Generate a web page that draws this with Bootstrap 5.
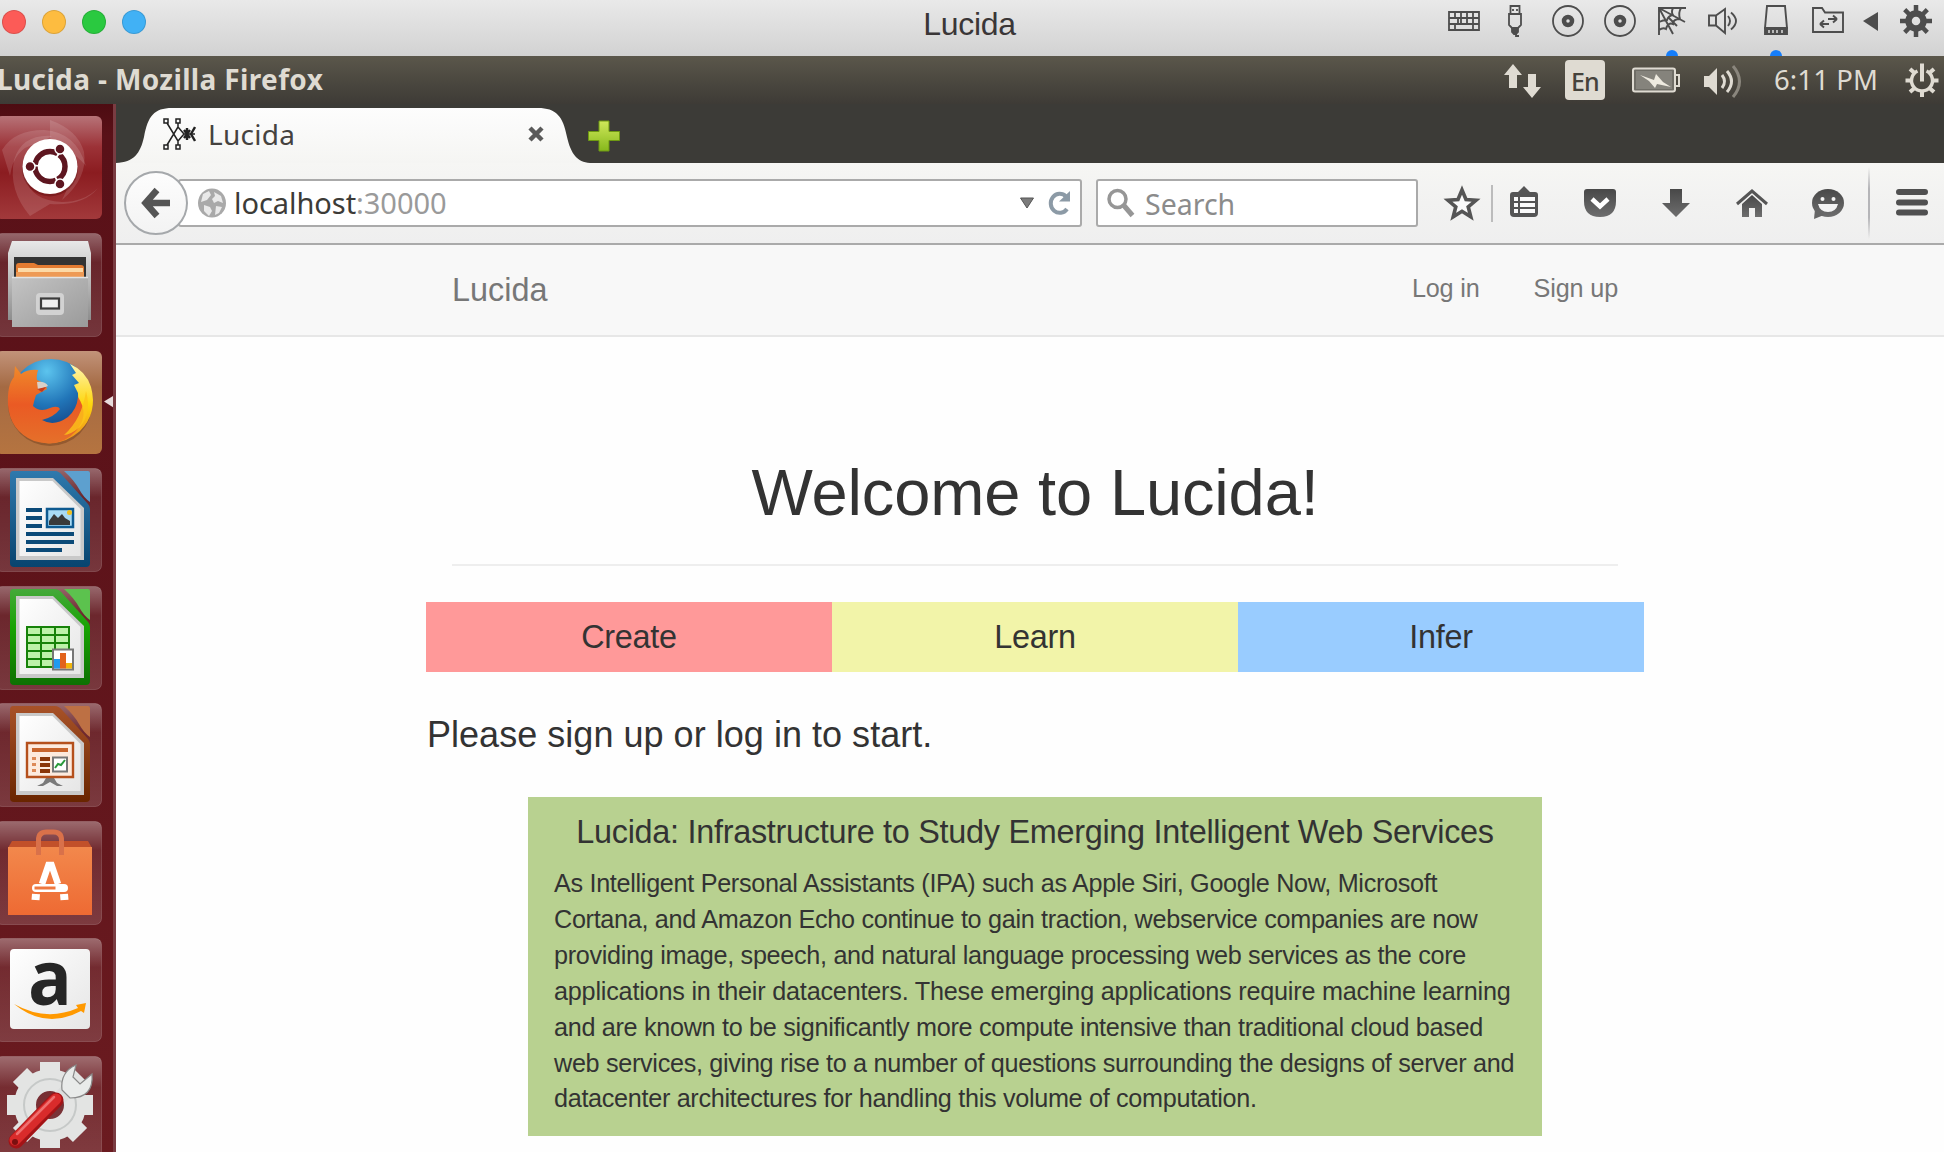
<!DOCTYPE html>
<html lang="en">
<head>
<meta charset="utf-8">
<title>Lucida</title>
<link href="https://cdn.jsdelivr.net/npm/bootstrap@5.3.0/dist/css/bootstrap.min.css" rel="stylesheet">
<script src="https://cdn.jsdelivr.net/npm/bootstrap@5.3.0/dist/js/bootstrap.bundle.min.js"></script>
<style>
body{height:1152px;width:1944px;overflow:hidden;font-family:"Liberation Sans",Arial,sans-serif;color:#333;background:#fefefe}
svg{display:block;flex:none}
.ui-font{font-family:"Noto Sans","Open Sans",sans-serif;white-space:nowrap}
/* host window title bar */
.vm-bar{height:56px;background:linear-gradient(#e9e9e9,#d2d2d2)}
.vm-side{width:506px}
.lights{gap:16px;padding-left:2px;height:44px}
.light{width:24px;height:24px;border-radius:50%;border:1px solid rgba(0,0,0,.13)}
.vm-title{font-size:32px;line-height:40px;color:#3a3637;letter-spacing:-.3px;padding-top:4px;padding-right:5px}
.vm-icons{color:#4d4d4d}
/* guest panel */
.panel{height:48px;background:linear-gradient(#5b574b,#4a473f 55%,#3e3b36);color:#dfdbd2}
.panel-title{font-size:28px;font-weight:700;line-height:47px;letter-spacing:.36px;margin-left:-3px}
.lang{width:40px;height:40px;background:#dfdbd2;color:#45423b;border-radius:4px;font-size:25px;line-height:42px;font-weight:500;letter-spacing:-.8px;margin:4px 23px 4px 17px}
.clock{font-size:27.5px;line-height:48px;width:108px;letter-spacing:.1px;margin:0 20px 0 28px}
/* launcher */
.launcher{width:116px;background:linear-gradient(#4d0c12,#5a1118 3%,#5d131a 40%,#6b1b20);border-right:3px solid #7a3c42;padding-top:11.6px;gap:13.5px;overflow:hidden}
/* browser */
.tabs{height:59px;background:#3c3b37;border-bottom:0}
.tab-shape{width:472px;height:59px;position:relative}
.tab-body{position:absolute;inset:0;padding:0 43px 0 46px}
.tab-name{font-size:28px;color:#45423f;margin-left:12px;letter-spacing:.3px}
.toolbar{height:82px;background:linear-gradient(#f6f6f4,#f2f2f1 50%,#efefef);border-bottom:2px solid #aaa}
.field{height:48px;background:#fff;border:2px solid #aaa;border-radius:3px}
.url{width:904px;margin-left:-10px;padding-left:18px;padding-right:6px}
.url-text{font-size:29px;color:#3c3b37;line-height:46px;margin-left:8px;letter-spacing:-.05px}
.port{color:#9a9a9a}
.search{width:322px;margin-left:14px;padding-left:9px;color:#8b8b8b;font-size:28.5px}
.search-label{margin-left:10px;padding-top:2px}
.back{width:64px;height:64px;border-radius:50%;border:2px solid #a5a8ab;background:linear-gradient(#fdfdfd,#f3f3f3);margin-left:8px;z-index:1}
.vr-a{width:1.5px;height:37px;background:#bcbcbc}
.vr-b{width:2px;height:72px;background:linear-gradient(transparent,#b5b5b8 30%,#b5b5b8 70%,transparent)}
/* page */
.site-nav{height:92px;background:#f8f8f8;border-bottom:2px solid #e7e7e7;color:#777}
.wrap{width:1166px;margin-left:336px}
.brand{font-size:32.4px;line-height:90px}
.nav-a{font-size:25.2px;line-height:87px;white-space:nowrap;letter-spacing:-.15px}
.log-in{margin-right:6px}
.hero{font-size:65px;letter-spacing:-.14px;line-height:72px;padding-top:120px;padding-bottom:35px;border-bottom:2px solid #eee;font-weight:400}
.steps{width:1218px;margin-left:310px;margin-top:36px}
.step{height:70px;font-size:32.4px;line-height:70px;letter-spacing:-.3px}
.bg-create{background:#ff9999}.bg-learn{background:#f2f4a9}.bg-infer{background:#99ccff}
.prompt{margin:39px 0 0 311px;font-size:36px;line-height:48px;white-space:nowrap;letter-spacing:.03px}
.about{width:1014px;margin:38px 0 0 412px;padding:0 26px;height:339px;background:#b8d190}
.about-title{font-size:32.4px;line-height:36px;padding-top:17px;margin:0 0 16px;white-space:nowrap;font-weight:400;letter-spacing:-.28px}
.about p{font-size:25.2px;line-height:35.9px;white-space:nowrap;margin:0;letter-spacing:-.305px}
.looser{letter-spacing:-.2px}
</style>
</head>
<body class="d-flex flex-column">
<svg width="0" height="0" class="position-absolute">
<defs>
<linearGradient id="tile" x1="0" y1="0" x2="0" y2="1"><stop offset="0" stop-color="#fff" stop-opacity=".36"/><stop offset=".28" stop-color="#fff" stop-opacity=".08"/><stop offset="1" stop-color="#fff" stop-opacity=".15"/></linearGradient>
<linearGradient id="paper" x1="0" y1="0" x2="1" y2="1"><stop offset="0" stop-color="#fff"/><stop offset="1" stop-color="#e6e6e6"/></linearGradient>
<linearGradient id="wr" x1="0" y1="0" x2="0" y2="1"><stop offset="0" stop-color="#2f79ad"/><stop offset="1" stop-color="#07446f"/></linearGradient>
<linearGradient id="ca" x1="0" y1="0" x2="0" y2="1"><stop offset="0" stop-color="#45a93b"/><stop offset=".4" stop-color="#18a303"/><stop offset="1" stop-color="#0d7003"/></linearGradient>
<linearGradient id="im" x1="0" y1="0" x2="0" y2="1"><stop offset="0" stop-color="#a85228"/><stop offset="1" stop-color="#692500"/></linearGradient>
<linearGradient id="metal" x1="0" y1="0" x2="0" y2="1"><stop offset="0" stop-color="#e8e8e8"/><stop offset="1" stop-color="#8d8d8d"/></linearGradient>
<linearGradient id="metal2" x1="0" y1="0" x2="1" y2="1"><stop offset="0" stop-color="#c4c4c4"/><stop offset="1" stop-color="#9a9a9a"/></linearGradient>
<linearGradient id="ora" x1="0" y1="0" x2="0" y2="1"><stop offset="0" stop-color="#f2884c"/><stop offset="1" stop-color="#ee6a33"/></linearGradient>
<linearGradient id="brn" x1="0" y1="0" x2="0" y2="1"><stop offset="0" stop-color="#c2937a"/><stop offset=".35" stop-color="#a46a43"/><stop offset="1" stop-color="#b57440"/></linearGradient>
<linearGradient id="ub" x1="0" y1="0" x2="0" y2="1"><stop offset="0" stop-color="#b77378"/><stop offset=".3" stop-color="#9c3237"/><stop offset=".55" stop-color="#8b1c20"/><stop offset="1" stop-color="#a2393b"/></linearGradient>
<radialGradient id="globe" cx=".45" cy=".15" r=".9"><stop offset="0" stop-color="#5cc4ee"/><stop offset=".45" stop-color="#2175b8"/><stop offset="1" stop-color="#0d2a6b"/></radialGradient>
<linearGradient id="fox" x1="0" y1="0" x2="0" y2="1"><stop offset="0" stop-color="#f08a2a"/><stop offset=".5" stop-color="#ea5a24"/><stop offset="1" stop-color="#e5702a"/></linearGradient>
<linearGradient id="flame" x1="0" y1="0" x2="0" y2="1"><stop offset="0" stop-color="#fff4b0"/><stop offset=".5" stop-color="#fdd70f"/><stop offset="1" stop-color="#f08a1c"/></linearGradient>
<linearGradient id="tabg" x1="0" y1="0" x2="0" y2="1"><stop offset="0" stop-color="#fdfdfd"/><stop offset="1" stop-color="#f5f5f3"/></linearGradient>
<linearGradient id="pl" x1="0" y1="0" x2="0" y2="1"><stop offset="0" stop-color="#cfe85a"/><stop offset="1" stop-color="#86b81c"/></linearGradient>
<linearGradient id="ico" x1="0" y1="0" x2="0" y2="1"><stop offset="0" stop-color="#484848"/><stop offset="1" stop-color="#6e6e6e"/></linearGradient>
</defs>
</svg>

<header class="vm-bar d-flex justify-content-between flex-shrink-0">
  <div class="vm-side">
    <div class="lights d-flex align-items-center">
      <span class="light" style="background:#fc5b57"></span><span class="light" style="background:#fdbc40"></span><span class="light" style="background:#2ac940"></span><span class="light" style="background:#41b1f5"></span>
    </div>
  </div>
  <div class="vm-title">Lucida</div>
  <div class="vm-icons vm-side d-flex">
    <svg width="52" height="56" viewBox="-26 0 52 56" fill="none" stroke="currentColor" stroke-width="1.8"><path d="M-15 12h30v18h-30zM-15 18h30M-15 24h30M-9 12v6M-3 12v12M3 12v12M9 12v12M-9 24v6M9 24v6M-6 18v6"/></svg>
    <svg width="52" height="56" viewBox="-25 0 52 56" fill="none" stroke="currentColor" stroke-width="1.8"><path d="M-4.500 14V6h9v8M-6 14h12v11l-3 3h-6l-3-3zM-2 9v2M2 9v2"/><path d="M-3 28h6v4l-2 2h-2l-2-2z" fill="currentColor"/><path d="M1 33v3h3"/></svg>
    <svg width="52" height="56" viewBox="-26 0 52 56" fill="none" stroke="currentColor" stroke-width="1.8"><circle cy="21" r="15"/><circle cy="21" r="4" stroke-width="4.500"/></svg>
    <svg width="52" height="56" viewBox="-26 0 52 56" fill="none" stroke="currentColor" stroke-width="1.8"><circle cy="21" r="15"/><circle cy="21" r="4" stroke-width="4.500"/></svg>
    <svg width="52" height="56" viewBox="-26 0 52 56" fill="none" stroke="currentColor" stroke-width="1.9"><path d="M-13 35V8H14M-13 8L13 22M-13 8L1 34M9 8Q6 13 8 19Q1 19 1 24Q-4 22-6 29Q-9 27-13 30M1 8Q-1 12 1 15Q-4 16-5 20Q-9 20-13 22M-4 17L5 26"/><circle cy="56" r="6" fill="#157efb" stroke="none"/></svg>
    <svg width="52" height="56" viewBox="-26 0 52 56" fill="none" stroke="currentColor" stroke-width="1.9"><path d="M-15 15.500h7v10h-7zM-8 15.500L1 9v24l-9-7.500M4 16q4 5 0 10M7 12.500q10 8.500 0 17" /></svg>
    <svg width="52" height="56" viewBox="-26 0 52 56" fill="none" stroke="currentColor" stroke-width="1.9"><path d="M-9 6H9L11 28H-11z"/><path d="M-11 28h22v6h-22z" fill="currentColor"/><path d="M-7 30v3M-3 30v3M1 30v3M6 30v3" stroke="#ddd" stroke-width="1.500"/><circle cy="56" r="6" fill="#157efb" stroke="none"/></svg>
    <svg width="52" height="56" viewBox="-26 0 52 56" fill="none" stroke="currentColor" stroke-width="1.9"><path d="M-15 32V8h9l3 4.500H15V32zM-8 24H1M-8 24l4-3.500M-8 24l4 3.500M9 19H0M9 19l-4-3.500M9 19l-4 3.500"/></svg>
    <svg width="34" height="56" viewBox="-17 0 34 56"><path d="M-8 21L7 12v19z" fill="currentColor"/></svg>
    <svg width="56" height="56" viewBox="-28 0 56 56"><g transform="translate(0 21)" fill="none" stroke="currentColor"><circle r="7.500" stroke-width="6.500"/><path d="M0-16V-9M0 16V9M-16 0H-9M16 0H9M-11.300-11.300L-7-7M11.300 11.300L7 7M-11.300 11.300L-7 7M11.300-11.300L7-7" stroke-width="4.500"/></g></svg>
  </div>
</header>

<div class="panel ui-font d-flex justify-content-between flex-shrink-0">
  <div class="panel-title">Lucida - Mozilla Firefox</div>
  <div class="d-flex">
    <svg width="52" height="48" viewBox="1496 56 52 48" fill="currentColor"><path d="M1513 64l9 11h-5v13h-8V75h-5zM1532 98l9-11h-5V74h-8v13h-5z"/></svg>
    <div class="lang text-center">En</div>
    <svg width="56" height="48" viewBox="1628 56 56 48"><rect x="1633" y="68.500" width="42" height="23" rx="2" fill="#6f6d66" stroke="#dfdbd2" stroke-width="2"/><path d="M1636 71h36v18h-36z" fill="#85837c"/><path d="M1676 75h3v11h-3" fill="none" stroke="#dfdbd2" stroke-width="2"/><path d="M1640 75l14 5 2-6 7 8 8 5-14-3-2 4-6-7z" fill="#eeeae0"/></svg>
    <svg width="62" height="48" viewBox="1684 56 62 48" fill="none" stroke="currentColor" stroke-width="3"><path d="M1704 76h5l8-8v27l-8-8h-5z" fill="currentColor" stroke="none"/><path d="M1722 75q5 6.500 0 13M1727 71q9 10.500 0 21"/><path d="M1733 66q13 15.500 0 31" stroke="#8a867d"/></svg>
    <div class="clock">6:11 PM</div>
    <svg width="42" height="48" viewBox="1902 56 42 48" fill="none" stroke="currentColor"><g transform="translate(1922 80.500)"><path d="M-4.500-9.500A10.500 10.500 0 1 0 4.500-9.500" stroke-width="3.500"/><path d="M0-17V1M0 16.500V11M-16.500 0H-11M16.500 0H11M-12-11.500L-8-8M12 11.500L8 8M-12 11.500L-8 8M12-11.500L8-8" stroke-width="4"/></g></svg>
  </div>
</div>

<div class="d-flex flex-grow-1 overflow-hidden">
  <nav class="launcher d-flex flex-column flex-shrink-0">
    <svg width="116" height="104" viewBox="0 0 116 104"><rect x="-4" width="106" height="103" rx="6" fill="url(#ub)"/><g fill="#fff" fill-opacity=".13"><path d="M50 4Q78 14 84 36Q88 62 62 84Q80 52 50 22z"/><path d="M2 34Q14 14 44 14Q76 16 86 50Q64 24 36 28Q14 32 10 60z"/><path d="M30 100Q8 74 14 44Q22 18 52 20Q24 34 26 62Q30 84 62 86Q84 86 98 72Q84 90 50 88z"/></g><circle cx="50" cy="52.500" r="28" fill="#400" opacity=".3"/><circle cx="50" cy="50.500" r="27.500" fill="#fff"/><circle cx="50" cy="50.500" r="15" fill="none" stroke="#5e1620" stroke-width="5.500" stroke-dasharray="29.400 2" stroke-dashoffset="14"/><g fill="#5e1620" stroke="#fff" stroke-width="1.500"><circle cx="30" cy="50.500" r="5"/><circle cx="60" cy="33" r="5"/><circle cx="60" cy="68" r="5"/></g></svg>
    <svg width="116" height="104" viewBox="0 0 116 104"><rect x="-4" y=".5" width="105.500" height="103" rx="6" fill="url(#tile)" stroke="#fff" stroke-opacity=".16"/><path d="M12 8h76l3 12v67H8V20z" fill="url(#metal)"/><path d="M14 24h72v22H14z" fill="#333"/><path d="M16 33q0-3 3-3h15l4 2h43q3 0 3 3v12H16z" fill="#e37b31"/><path d="M18 35h65v4.500H18z" fill="#fcd9a6"/><path d="M16 39h68v7H16z" fill="#ee9a55"/><path d="M12 44h76v50H12z" fill="url(#metal2)"/><path d="M12 44.500h76" stroke="#e4e4e4" stroke-width="1.500"/><rect x="36" y="60" width="28" height="22" rx="4" fill="#d2d2d2"/><rect x="41" y="65.500" width="18" height="10" fill="#eee" stroke="#3b3b3b" stroke-width="2.200"/></svg>
    <svg width="116" height="104" viewBox="0 0 116 104"><rect x="-4" width="106" height="103" rx="6" fill="url(#brn)"/><ellipse cx="50" cy="53" rx="42" ry="42" fill="#5a2a10" opacity=".35"/><circle cx="51" cy="49" r="41" fill="url(#globe)"/><path d="M70 13Q86 20 91 36Q98 62 80 80Q64 94 46 92L70 76Q80 60 78 42L74 34L79 32L72 24L76 22z" fill="url(#flame)"/><path d="M15 15L21 23Q28 18 38 19Q36 26 37 29Q46 32 47 38L36 44Q34 50 33 55Q40 62 50 57Q58 54 60 58Q54 66 42 69Q54 76 68 66Q77 58 78 46Q90 64 76 80Q60 98 34 90Q10 80 8 54Q7 34 14 26z" fill="url(#fox)"/><path d="M37 31Q45 30 48 35L38 39z" fill="#d8d0c8"/><path d="M37 38l9-2-4 5z" fill="#c33a1c"/><path d="M86 40Q92 62 80 76Q70 84 64 84Q82 68 86 40z" fill="#fcc419" opacity=".8"/><path d="M104 50.500L116 43v15z" fill="#e8dcdc"/></svg>
    <svg width="116" height="104" viewBox="0 0 116 104"><rect x="-4" y=".5" width="105.500" height="103" rx="6" fill="url(#tile)" stroke="#fff" stroke-opacity=".16"/><path d="M13 3h42q4 0 8 5l25 28q2 2 2 5v54q0 4-4 4H14q-4 0-4-4V7q0-4 3-4z" fill="url(#wr)"/><path d="M16 10h37l31 30v52H16z" fill="#c9c9c9"/><path d="M19.500 13h33l28 28v47h-61z" fill="url(#paper)"/><path d="M64 3h24q2 0 2 2v29q-6-4-11-13T64 3z" fill="#5da0cf"/><g fill="#0b4a78"><path d="M26 40h16v4H26zM26 48h16v4H26zM26 56h16v4H26zM26 64h48v4H26zM26 72h48v4H26zM26 80h36v4H26z"/></g><path d="M47 41h26v18H47z" fill="#a9dbf5" stroke="#0e5a90" stroke-width="2.500"/><path d="M49 57v-4l5-7 4 4 4-4 3 4 5 3v4z" fill="#3a3a3a"/><circle cx="69.500" cy="44.500" r="2.500" fill="#f0c020"/></svg>
    <svg width="116" height="104" viewBox="0 0 116 104"><rect x="-4" y=".5" width="105.500" height="103" rx="6" fill="url(#tile)" stroke="#fff" stroke-opacity=".16"/><path d="M13 3h42q4 0 8 5l25 28q2 2 2 5v54q0 4-4 4H14q-4 0-4-4V7q0-4 3-4z" fill="url(#ca)"/><path d="M16 10h37l31 30v52H16z" fill="#c9c9c9"/><path d="M19.500 13h33l28 28v47h-61z" fill="url(#paper)"/><path d="M64 3h24q2 0 2 2v29q-6-4-11-13T64 3z" fill="#5cc24e"/><path d="M27 41h42v40H27z" fill="#bdf2a9"/><path d="M27 41h42v40H27zM27 49h42M27 57h42M27 65h42M27 73h42M41 41v40M55 41v40" fill="none" stroke="#168209" stroke-width="2"/><path d="M53 63.500h20v20H53z" fill="#fff" stroke="#777" stroke-width="2"/><path d="M54 73h6v9.500h-6z" fill="#1f9af0"/><path d="M60 67h6v15.500h-6z" fill="#e2631c"/><path d="M66 77h6v5.500h-6z" fill="#f2b60c"/></svg>
    <svg width="116" height="104" viewBox="0 0 116 104"><rect x="-4" y=".5" width="105.500" height="103" rx="6" fill="url(#tile)" stroke="#fff" stroke-opacity=".16"/><path d="M13 3h42q4 0 8 5l25 28q2 2 2 5v54q0 4-4 4H14q-4 0-4-4V7q0-4 3-4z" fill="url(#im)"/><path d="M16 10h37l31 30v52H16z" fill="#c9c9c9"/><path d="M19.500 13h33l28 28v47h-61z" fill="url(#paper)"/><path d="M64 3h24q2 0 2 2v29q-6-4-11-13T64 3z" fill="#bd7044"/><path d="M46 75h8l3 5 6 3h-6l-7-4-7 4h-6l6-3z" fill="#7a7a7a"/><path d="M27 40h46v34H27z" fill="#fdeadd" stroke="#b5501c" stroke-width="2.400"/><path d="M32 45h36v4H32z" fill="#c8642c"/><path d="M32 54h4v3h-4zM32 60h4v3h-4zM32 66h4v3h-4z" fill="#dd8a58"/><path d="M40 54h10v4H40zM40 60h10v4H40zM40 66h10v4H40z" fill="#8a3608"/><path d="M53 54.500h14v14H53z" fill="#fff" stroke="#777" stroke-width="2"/><path d="M55 65l3-4 3 1 4-5" fill="none" stroke="#2a9a3a" stroke-width="2"/></svg>
    <svg width="116" height="104" viewBox="0 0 116 104"><rect x="-4" y=".5" width="105.500" height="103" rx="6" fill="url(#tile)" stroke="#fff" stroke-opacity=".16"/><path d="M12 20h76l4 7H8z" fill="#c2502a"/><path d="M8 26h84v68H8z" fill="url(#ora)"/><path d="M38.500 34V19q0-8 8-8h7q8 0 8 8v15" fill="none" stroke="#d9714a" stroke-width="5"/><g stroke="#fff" fill="none"><path d="M42 63L48.500 44h3L58 63" stroke-width="6.500"/><path d="M36 73l-.5 6M64 73l.5 6" stroke-width="8"/></g><rect x="32" y="63" width="36" height="8" rx="4" fill="#fff"/><path d="M34.500 65.500h21v3h-21z" fill="#ee7840"/></svg>
    <svg width="116" height="104" viewBox="0 0 116 104"><rect x="-4" y=".5" width="105.500" height="103" rx="6" fill="url(#tile)" stroke="#fff" stroke-opacity=".16"/><rect x="10" y="11" width="80" height="80" rx="4" fill="url(#paper)"/><text x="28" y="66.500" font-family="Open Sans,sans-serif" font-weight="700" font-size="76" textLength="44" lengthAdjust="spacingAndGlyphs" fill="#262626">a</text><path d="M14 66Q46 84 78 70l-2-3 10-2-2 10-3-2Q46 92 14 66z" fill="#f90"/></svg>
    <svg width="116" height="104" viewBox="0 0 116 104"><rect x="-4" y=".5" width="105.500" height="110" rx="6" fill="url(#tile)" stroke="#fff" stroke-opacity=".16"/><g transform="translate(50 49)"><g fill="none" stroke="#e3e4e3"><circle r="25" stroke-width="22"/><path d="M0-43V-28M0 43V28M-43 0H-28M43 0H28M-30-30L-20-20M30 30L20 20M-30 30L-20 20M30-30L20-20" stroke-width="20"/></g><circle r="26" fill="none" stroke="#c6c9c8" stroke-width="2"/></g><path d="M60 42L70 31" stroke="#dcdedd" stroke-width="14"/><path d="M62 34Q60 16 76 9L73 21L80 28L92 18Q94 42 70 42z" fill="#e9ebea" stroke="#8a8a8a" stroke-width="1.200"/><path d="M16 85L56 44" stroke="#a31316" stroke-width="15" stroke-linecap="round"/><path d="M15 84L56 43" stroke="#d92b2b" stroke-width="11" stroke-linecap="round"/><path d="M17 78L54 41" stroke="#f07070" stroke-width="2.500" stroke-linecap="round"/><circle cx="15" cy="86" r="3" fill="#7a1010"/></svg>
  </nav>

  <main class="flex-grow-1 d-flex flex-column">
    <div class="tabs d-flex flex-shrink-0">
      <div class="tab-shape">
        <svg width="474" height="59" viewBox="0 0 474 59"><path d="M0 59C18 58 24 50 28 33C32 12 38 4 56 4H422C440 4 447 12 451 33C455 50 461 58 474 59z" fill="url(#tabg)"/></svg>
        <div class="tab-body d-flex align-items-center">
          <svg width="34" height="34" viewBox="0 0 34 34" fill="none" stroke="#222" stroke-width="1.500"><rect x="2" y="2" width="4" height="4"/><rect x="2" y="28" width="4" height="4"/><rect x="14" y="2" width="4" height="4"/><rect x="14" y="28" width="4" height="4"/><path d="M5 6L16 24V28M5 28L16 10V6M16 10l6 7-6 7M22 17h11"/><path d="M25 11v12M22 13l6 8M22 21l6-8M33 10l-4 7 4 7" stroke-width="2.400"/></svg>
          <span class="tab-name ui-font">Lucida</span>
          <svg class="ms-auto" width="18" height="18" viewBox="0 0 18 18"><path d="M3 3L15 15M15 3L3 15" stroke="#5a5a5a" stroke-width="4.500"/></svg>
        </div>
      </div>
      <svg width="36" height="59" viewBox="586 104 36 59"><path d="M597 121h10v10.500h10.500v9h-10.500v10.500h-10v-10.500H586.500v-9h10.500z" fill="url(#pl)" stroke="#6f9a12"/></svg>
    </div>

    <div class="toolbar d-flex align-items-center flex-shrink-0">
      <div class="back d-flex align-items-center justify-content-center flex-shrink-0"><svg width="30" height="34" viewBox="0 0 30 34"><path d="M16 4L4.500 17L16 30M5 17H29" fill="none" stroke="#555" stroke-width="6.500"/></svg></div>
      <div class="field url d-flex align-items-center flex-shrink-0">
        <svg width="28" height="30" viewBox="0 0 28 30"><ellipse cx="14" cy="15" rx="14" ry="14.500" fill="#a9a9a9"/><path d="M5 6l6-3 2 4-4 5-6 2zM16 4l7 4 2 7-5-2-4 2-2-4 3-3zM6 17l6 2 2 4-3 5-5-5zM18 18l6 1-3 6-4 2z" fill="#e9e9e9"/></svg>
        <div class="url-text ui-font">localhost<span class="port">:30000</span></div>
        <svg class="ms-auto" width="16" height="12" viewBox="0 0 16 12"><path d="M1.500 1h13L8 11z" fill="#7b7b7b" stroke="#555"/></svg>
        <svg class="ms-2" width="31" height="26" viewBox="-5 0 31 26"><path d="M19 19A9 9.500 0 1 1 18 6.500" fill="none" stroke="#8c9aa6" stroke-width="4"/><path d="M11 11.500h11V1z" fill="#8c9aa6"/></svg>
      </div>
      <div class="field search d-flex align-items-center ui-font flex-shrink-0">
        <svg width="28" height="30" viewBox="0 0 28 30"><circle cx="10.500" cy="11" r="8.500" fill="none" stroke="#969696" stroke-width="3.500"/><path d="M16.500 17L25.500 27.500" stroke="#969696" stroke-width="5"/></svg>
        <span class="search-label">Search</span>
      </div>
      <svg width="73" height="80" viewBox="1418 163 73 80"><path d="M1462 190l4 9.500 10 .8-7.800 6.500 2.600 10-8.800-5.500-8.800 5.500 2.600-10-7.800-6.500 10-.8z" fill="#fbfbfb" stroke="#555" stroke-width="3.600"/></svg>
      <span class="vr-a"></span>
      <svg width="70" height="80" viewBox="1493 163 70 80"><path d="M1513 192h5l6-6 6 6h5q3 0 3 3v18q0 4-4 4h-20q-4 0-4-4v-18q0-3 3-3z" fill="#555"/><path d="M1514 197h4v4h-4zM1520 197h15v4h-15zM1514 203h4v4h-4zM1520 203h15v4h-15zM1514 209h4v4h-4zM1520 209h15v4h-15z" fill="#fafafa"/></svg>
      <svg width="76" height="80" viewBox="1563 163 76 80"><path d="M1587 189h26q3 0 3 3v9q0 16-16 16t-16-16v-9q0-3 3-3z" fill="url(#ico)"/><path d="M1592 199l8 7.500 8-7.500" fill="none" stroke="#fff" stroke-width="4.500"/></svg>
      <svg width="76" height="80" viewBox="1639 163 76 80"><path d="M1670 189h12v14h8l-14 14-14-14h8z" fill="url(#ico)"/></svg>
      <svg width="76" height="80" viewBox="1715 163 76 80"><path d="M1742 204l10-9 10 9v13h-7v-9h-6v9h-7z" fill="url(#ico)"/><path d="M1737 204l15-13 15 13" fill="none" stroke="#555" stroke-width="3"/></svg>
      <svg width="77" height="80" viewBox="1791 163 77 80"><ellipse cx="1828" cy="203" rx="16" ry="14" fill="url(#ico)"/><path d="M1815 209l-1 10 10-4z" fill="#666"/><circle cx="1822.500" cy="199" r="2" fill="#f4f4f4"/><circle cx="1833.500" cy="199" r="2" fill="#f4f4f4"/><path d="M1818 204h20q-2 8-10 8t-10-8z" fill="#f4f4f4"/></svg>
      <span class="vr-b"></span>
      <svg width="60" height="80" viewBox="1870 163 60 80"><path d="M1899 192h26M1899 202.500h26M1899 212.500h26" stroke="#505050" stroke-width="6" stroke-linecap="round"/></svg>
    </div>

    <nav class="site-nav flex-shrink-0">
      <div class="wrap d-flex justify-content-between">
        <div class="brand">Lucida</div>
        <div class="d-flex gap-5 nav-a"><span class="log-in">Log in</span><span>Sign up</span></div>
      </div>
    </nav>
    <div class="wrap hero text-center">Welcome to Lucida!</div>
    <div class="steps row g-0 text-center flex-shrink-0">
      <div class="col-4 step bg-create">Create</div>
      <div class="col-4 step bg-learn">Learn</div>
      <div class="col-4 step bg-infer">Infer</div>
    </div>
    <div class="prompt">Please sign up or log in to start.</div>
    <section class="about flex-shrink-0">
      <h3 class="about-title text-center">Lucida: Infrastructure to Study Emerging Intelligent Web Services</h3>
      <p>As Intelligent Personal Assistants (IPA) such as Apple Siri, Google Now, Microsoft<br>Cortana, and Amazon Echo continue to gain traction, webservice companies are now<br>providing image, speech, and natural language processing web services as the core<br><span class="looser">applications in their datacenters. These emerging applications require machine learning</span><br>and are known to be significantly more compute intensive than traditional cloud based<br>web services, giving rise to a number of questions surrounding the designs of server and<br>datacenter architectures for handling this volume of computation.</p>
    </section>
  </main>
</div>
</body>
</html>
